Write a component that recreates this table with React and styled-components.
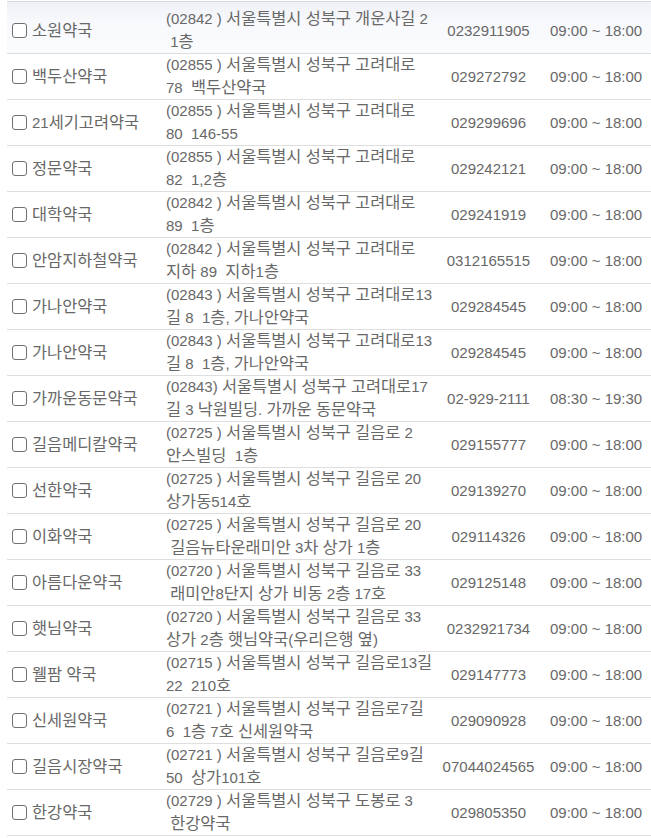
import styled, { createGlobalStyle } from 'styled-components';

const GlobalStyle = createGlobalStyle`
  html, body {
    margin: 0;
    padding: 0;
    background: #ffffff;
  }
  body {
    font-family: "Liberation Sans", "Noto Sans CJK KR", sans-serif;
    font-size: 15px;
    color: #686868;
  }
`;

const Table = styled.div`
  margin: 1px 0 0 7px;
  border-top: 1px solid #d3d8df;
`;

const Row = styled.div`
  display: grid;
  grid-template-columns: 154px 275px 95px auto;
  align-items: center;
  height: 45px;
  padding: ${(props) => (props.$first ? '6px 0 0 5px' : '0 0 0 5px')};
  border-bottom: 1px solid #dedede;
  background: ${(props) =>
    props.$first ? 'linear-gradient(#eef1f7, #f8f9fc 40%, #fafbfd)' : '#ffffff'};
`;

const NameCell = styled.label`
  display: flex;
  align-items: center;
  gap: 5px;
  height: 22px;
  line-height: 22px;
  white-space: nowrap;
`;

const Check = styled.input`
  appearance: none;
  margin: 0;
  width: 15px;
  height: 15px;
  box-sizing: border-box;
  border: 1px solid #707070;
  border-radius: 3px;
  background: #ffffff;
  flex-shrink: 0;
`;

const AddressCell = styled.div`
  display: flex;
  flex-direction: column;
`;

const Line = styled.div`
  height: 22.5px;
  line-height: 22.5px;
  white-space: pre;
  overflow: visible;
`;

const PhoneCell = styled.div`
  text-align: center;
  white-space: nowrap;
`;

const HoursCell = styled.div`
  padding-left: 14px;
  white-space: nowrap;
`;

// Hangul runs get a slightly larger size so they take the width they have in the original font
const Han = styled.span`
  font-family: "Noto Sans CJK KR", sans-serif;
  font-size: 16.4px;
  line-height: 1;
`;

const ko = (text) =>
  text.split(/([\uAC00-\uD7A3]+)/).map((part, i) =>
    /[\uAC00-\uD7A3]/.test(part) ? <Han key={i}>{part}</Han> : part
  );

const pharmacies = [
  { name: '소원약국', addr: ['(02842 ) 서울특별시 성북구 개운사길 2', ' 1층'], phone: '0232911905', hours: '09:00 ~ 18:00' },
  { name: '백두산약국', addr: ['(02855 ) 서울특별시 성북구 고려대로', '78  백두산약국'], phone: '029272792', hours: '09:00 ~ 18:00' },
  { name: '21세기고려약국', addr: ['(02855 ) 서울특별시 성북구 고려대로', '80  146-55'], phone: '029299696', hours: '09:00 ~ 18:00' },
  { name: '정문약국', addr: ['(02855 ) 서울특별시 성북구 고려대로', '82  1,2층'], phone: '029242121', hours: '09:00 ~ 18:00' },
  { name: '대학약국', addr: ['(02842 ) 서울특별시 성북구 고려대로', '89  1층'], phone: '029241919', hours: '09:00 ~ 18:00' },
  { name: '안암지하철약국', addr: ['(02842 ) 서울특별시 성북구 고려대로', '지하 89  지하1층'], phone: '0312165515', hours: '09:00 ~ 18:00' },
  { name: '가나안약국', addr: ['(02843 ) 서울특별시 성북구 고려대로13', '길 8  1층, 가나안약국'], phone: '029284545', hours: '09:00 ~ 18:00' },
  { name: '가나안약국', addr: ['(02843 ) 서울특별시 성북구 고려대로13', '길 8  1층, 가나안약국'], phone: '029284545', hours: '09:00 ~ 18:00' },
  { name: '가까운동문약국', addr: ['(02843) 서울특별시 성북구 고려대로17', '길 3 낙원빌딩. 가까운 동문약국'], phone: '02-929-2111', hours: '08:30 ~ 19:30' },
  { name: '길음메디칼약국', addr: ['(02725 ) 서울특별시 성북구 길음로 2', '안스빌딩  1층'], phone: '029155777', hours: '09:00 ~ 18:00' },
  { name: '선한약국', addr: ['(02725 ) 서울특별시 성북구 길음로 20', '상가동514호'], phone: '029139270', hours: '09:00 ~ 18:00' },
  { name: '이화약국', addr: ['(02725 ) 서울특별시 성북구 길음로 20', ' 길음뉴타운래미안 3차 상가 1층'], phone: '029114326', hours: '09:00 ~ 18:00' },
  { name: '아름다운약국', addr: ['(02720 ) 서울특별시 성북구 길음로 33', ' 래미안8단지 상가 비동 2층 17호'], phone: '029125148', hours: '09:00 ~ 18:00' },
  { name: '햇님약국', addr: ['(02720 ) 서울특별시 성북구 길음로 33', '상가 2층 햇님약국(우리은행 옆)'], phone: '0232921734', hours: '09:00 ~ 18:00' },
  { name: '웰팜 약국', addr: ['(02715 ) 서울특별시 성북구 길음로13길', '22  210호'], phone: '029147773', hours: '09:00 ~ 18:00' },
  { name: '신세원약국', addr: ['(02721 ) 서울특별시 성북구 길음로7길', '6  1층 7호 신세원약국'], phone: '029090928', hours: '09:00 ~ 18:00' },
  { name: '길음시장약국', addr: ['(02721 ) 서울특별시 성북구 길음로9길', '50  상가101호'], phone: '07044024565', hours: '09:00 ~ 18:00' },
  { name: '한강약국', addr: ['(02729 ) 서울특별시 성북구 도봉로 3', ' 한강약국'], phone: '029805350', hours: '09:00 ~ 18:00' },
];

const App = () => {
  return (
    <>
      <GlobalStyle />
      <Table>
        {pharmacies.map((p, i) => (
          <Row key={i} $first={i === 0}>
            <NameCell>
              <Check type="checkbox" />
              <span>{ko(p.name)}</span>
            </NameCell>
            <AddressCell>
              <Line>{ko(p.addr[0])}</Line>
              <Line>{ko(p.addr[1])}</Line>
            </AddressCell>
            <PhoneCell>{p.phone}</PhoneCell>
            <HoursCell>{p.hours}</HoursCell>
          </Row>
        ))}
      </Table>
    </>
  );
};

export default App;
